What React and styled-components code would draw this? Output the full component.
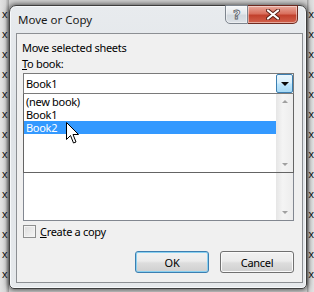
import React from "react";
import styled, { createGlobalStyle } from "styled-components";

const GlobalStyle = createGlobalStyle`
  html, body { margin: 0; padding: 0; }
  body {
    font-family: "Noto Sans", "Open Sans", sans-serif;
    font-size: 11px;
    letter-spacing: -0.3px;
    color: #000;
  }
`;

const marks = Array.from({ length: 14 }, (_, i) => i);

const Desktop = styled.div`
  width: 314px;
  height: 292px;
  display: flex;
  overflow: hidden;
  background: #cfcfcf;
`;

const Gutter = styled.div`
  width: ${(p) => p.$width}px;
  flex-shrink: 0;
  padding-top: 4px;
  display: flex;
  flex-direction: column;
  align-items: ${(p) => (p.$side === "left" ? "flex-start" : "flex-end")};
  background: linear-gradient(
    ${(p) => (p.$side === "left" ? "90deg" : "270deg")},
    #e2e2e2 0,
    #d6d6d6 60%,
    #9a9a9a 100%
  );
`;

const Mark = styled.span`
  height: 20px;
  line-height: 20px;
  font-family: "Liberation Sans", sans-serif;
  font-size: 11px;
  letter-spacing: 0;
  padding-left: ${(p) => (p.$side === "left" ? 2 : 0)}px;
  color: #111;
`;

const Window = styled.div`
  position: relative;
  width: 298px;
  height: 284px;
  margin-top: 5px;
  flex-shrink: 0;
  box-sizing: border-box;
  border: 1px solid #3e3e3e;
  border-radius: 7px 7px 5px 5px;
  background: linear-gradient(#e8ebee, #dfe3e7 40%, #e6e9ec);
  box-shadow: 0 0 5px 1px rgba(0, 0, 0, 0.6), inset 0 0 0 1px #f7f9fb;
  padding: 0 3px 5px 6px;
  display: flex;
  flex-direction: column;
`;

const TitleBar = styled.div`
  height: 27px;
  display: flex;
  align-items: flex-start;
`;

const Caption = styled.div`
  flex: 1;
  padding: 6px 0 0 2px;
  font-size: 11.5px;
  letter-spacing: 0;
  line-height: 16px;
  color: #1a1a1a;
`;

const CaptionButton = styled.div`
  height: 19px;
  margin-top: -1px;
  box-sizing: border-box;
  display: flex;
  align-items: center;
  justify-content: center;
  width: ${(p) => (p.$close ? 50 : 23)}px;
  margin-right: ${(p) => (p.$close ? 5 : 0)}px;
  border: 1px solid ${(p) => (p.$close ? "#6e2a20" : "#7e858e")};
  border-left-width: ${(p) => (p.$close ? 0 : 1)}px;
  border-radius: ${(p) => (p.$close ? "0 0 5px 0" : "0 0 0 5px")};
  background: ${(p) =>
    p.$close
      ? "linear-gradient(#e9a99c, #d9705e 45%, #c2412d 55%, #d2614c)"
      : "linear-gradient(#f5f7f9, #e3e7eb 45%, #d2d8de 55%, #dde2e7)"};
  box-shadow: inset 0 0 0 1px rgba(255, 255, 255, 0.45);
`;

const HelpGlyph = styled.span`
  font-family: "DejaVu Sans", sans-serif;
  font-weight: bold;
  font-size: 13px;
  line-height: 13px;
  color: #f6f7f8;
  -webkit-text-stroke: 0.8px #5b6169;
`;

const Client = styled.div`
  flex: 1;
  box-sizing: border-box;
  border: 1px solid #8c8f93;
  background: #f0f0f0;
  padding: 6px 8px 0 6px;
  display: flex;
  flex-direction: column;
`;

const Label = styled.div`
  height: 16px;
  line-height: 16px;
  margin-left: -1px;
  white-space: nowrap;
`;

const Combo = styled.div`
  margin-top: 1px;
  height: 21px;
  box-sizing: border-box;
  border: 1px solid #7a7a7a;
  background: #fff;
  display: flex;
  align-items: center;
`;

const ComboText = styled.div`
  flex: 1;
  padding-left: 2px;
  line-height: 16px;
`;

const DropButton = styled.div`
  width: 17px;
  height: 19px;
  box-sizing: border-box;
  border: 1px solid #3c7fb1;
  border-radius: 2px;
  background: linear-gradient(#eaf6fd, #d9f0fc 45%, #bee6fd 55%, #a7d9f5);
  display: flex;
  align-items: center;
  justify-content: center;
`;

const DropList = styled.div`
  height: 79px;
  box-sizing: border-box;
  border: 1px solid #646464;
  border-top: none;
  background: #fff;
  display: flex;
`;

const Rows = styled.div`
  flex: 1;
  padding-top: 1px;
`;

const Row = styled.div`
  height: 13px;
  line-height: 13px;
  padding-left: 2px;
  background: ${(p) => (p.$selected ? "#3399ff" : "transparent")};
  color: ${(p) => (p.$selected ? "#fff" : "#000")};
`;

const ScrollBar = styled.div`
  width: 17px;
  background: linear-gradient(90deg, #e6e6e6, #f4f4f4 40%, #ececec);
  display: flex;
  flex-direction: column;
  justify-content: ${(p) => (p.$bottomOnly ? "flex-end" : "space-between")};
  align-items: center;
  padding: 6px 0;
  box-sizing: border-box;
`;

const Arrow = styled.div`
  width: 0;
  height: 0;
  border-left: 3px solid transparent;
  border-right: 3px solid transparent;
  ${(p) =>
    p.$up
      ? "border-bottom: 3px solid #a0a0a0;"
      : "border-top: 3px solid #a0a0a0;"}
`;

const ComboArrow = styled.div`
  width: 0;
  height: 0;
  border-left: 4px solid transparent;
  border-right: 4px solid transparent;
  border-top: 4px solid #0a0a0a;
  margin-top: 1px;
`;

const ListBox = styled.div`
  height: 48px;
  box-sizing: border-box;
  border: 1px solid #828790;
  border-top: none;
  background: #fff;
  display: flex;
  justify-content: flex-end;
`;

const CheckRow = styled.label`
  margin-top: 4px;
  height: 13px;
  display: flex;
  align-items: center;
  gap: 4px;
`;

const CheckBox = styled.span`
  width: 13px;
  height: 13px;
  box-sizing: border-box;
  border: 1px solid #8e8f8f;
  background: linear-gradient(135deg, #dcdcdc, #f6f6f6);
  box-shadow: inset 0 0 0 1px #f4f4f4;
`;

const ButtonRow = styled.div`
  margin-top: 13px;
  display: flex;
  justify-content: flex-end;
  gap: 11px;
`;

const Button = styled.button`
  width: ${(p) => p.$width}px;
  height: 22px;
  box-sizing: border-box;
  font-family: inherit;
  font-size: 11px;
  letter-spacing: inherit;
  color: #000;
  border: 1px solid ${(p) => (p.$default ? "#3c7fb1" : "#707070")};
  border-radius: 3px;
  background: linear-gradient(#f2f2f2, #ebebeb 45%, #dddddd 55%, #cfcfcf);
  box-shadow: inset 0 0 0 1px
    ${(p) => (p.$default ? "#8ad0f0" : "#fafafa")};
  padding: 0;
`;

const Cursor = styled.svg`
  position: absolute;
  left: 56px;
  top: 116px;
`;

export default function App() {
  return (
    <>
      <GlobalStyle />
      <Desktop>
        <Gutter $side="left" $width={9}>
          {marks.map((i) => (
            <Mark key={i} $side="left">x</Mark>
          ))}
        </Gutter>
        <Window>
          <TitleBar>
            <Caption>Move or Copy</Caption>
            <CaptionButton>
              <HelpGlyph>?</HelpGlyph>
            </CaptionButton>
            <CaptionButton $close>
              <svg width="14" height="11" viewBox="0 0 14 11">
                <path d="M2 1.5 L12 9.5 M12 1.5 L2 9.5" stroke="#5a1f16" strokeWidth="4" strokeLinecap="round" />
                <path d="M2 1.5 L12 9.5 M12 1.5 L2 9.5" stroke="#fff" strokeWidth="2.2" strokeLinecap="round" />
              </svg>
            </CaptionButton>
          </TitleBar>
          <Client>
            <Label>Move selected sheets</Label>
            <Label>
              <u>T</u>o book:
            </Label>
            <Combo>
              <ComboText>Book1</ComboText>
              <DropButton>
                <ComboArrow />
              </DropButton>
            </Combo>
            <DropList>
              <Rows>
                <Row>(new book)</Row>
                <Row>Book1</Row>
                <Row $selected>Book2</Row>
              </Rows>
              <ScrollBar>
                <Arrow $up />
                <Arrow />
              </ScrollBar>
            </DropList>
            <ListBox>
              <ScrollBar $bottomOnly>
                <Arrow />
              </ScrollBar>
            </ListBox>
            <CheckRow>
              <CheckBox />
              <span>
                <u>C</u>reate a copy
              </span>
            </CheckRow>
            <ButtonRow>
              <Button $width={74} $default>OK</Button>
              <Button $width={74}>Cancel</Button>
            </ButtonRow>
          </Client>
          <Cursor width="14" height="23" viewBox="0 0 14 23">
            <path
              d="M0.5 0.5 L0.5 17.5 L4.5 13.5 L7.5 21 L10 20 L7 12.5 L12.5 12.5 Z"
              fill="#fff"
              stroke="#000"
              strokeWidth="1"
              strokeLinejoin="miter"
            />
          </Cursor>
        </Window>
        <Gutter $side="right" $width={7}>
          {marks.map((i) => (
            <Mark key={i} $side="right">x</Mark>
          ))}
        </Gutter>
      </Desktop>
    </>
  );
}
